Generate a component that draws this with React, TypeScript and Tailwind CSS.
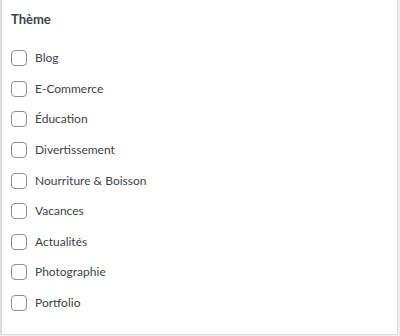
import React from "react";

const items = [
  "Blog",
  "E-Commerce",
  "Éducation",
  "Divertissement",
  "Nourriture & Boisson",
  "Vacances",
  "Actualités",
  "Photographie",
  "Portfolio",
];

export default function App() {
  return (
    <div className="w-[400px] h-[336px] bg-[#f0f0f1]" style={{ fontFamily: 'Lato, "Noto Sans", sans-serif' }}>
      <div className="w-[398px] h-[335px] bg-white border-l-2 border-r border-b border-[#dcdcde] pl-[9px] pt-[11px]">
        <div className="text-[13px] font-bold text-[#3c434a] leading-[16px]">Thème</div>
        <ul className="mt-[23px] flex flex-col gap-[14.65px]">
          {items.map((it) => (
            <li key={it} className="flex items-center h-[16px]">
              <span className="w-[16px] h-[16px] rounded-[4px] border border-[#8c8f94] bg-white shrink-0" />
              <span className="ml-[8px] text-[12px] text-[#3c434a] leading-[16px]">{it}</span>
            </li>
          ))}
        </ul>
      </div>
    </div>
  );
}
